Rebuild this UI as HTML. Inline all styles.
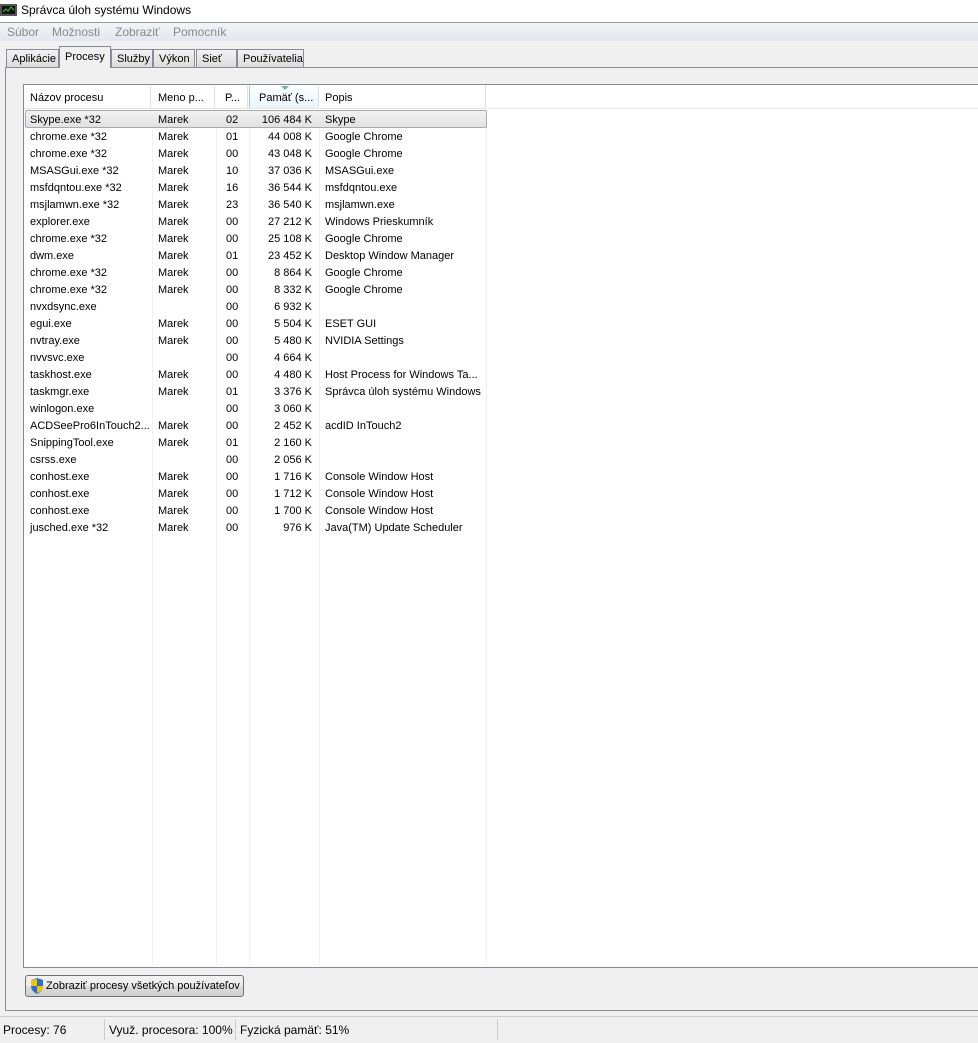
<html><head><style>
body{margin:0;width:978px;height:1041px;background:#f0f0f0;font-family:"Liberation Sans",sans-serif;font-size:11px;color:#000;position:relative;overflow:hidden}
.a{position:absolute}
.title{left:0;top:0;width:978px;height:22px;background:#fff;font-size:12px}
.menu{left:0;top:22px;width:978px;height:18px;background:linear-gradient(#f3f4f8,#e3e6ee);border-top:1px solid #999;color:#888;font-size:12px}
.menu span{position:absolute;top:2px}
.tab{top:49px;height:18px;border:1px solid #898c95;border-bottom:none;background:linear-gradient(#f2f2f2,#dcdcdc);padding:0 0 0 5px;line-height:19px;box-sizing:border-box;white-space:nowrap}
.panel{left:5px;top:67px;width:980px;height:942px;border:1px solid #898c95;background:#f0f0f0}
.list{left:23px;top:84px;width:960px;height:882px;border:1px solid #828790;background:#fff}
.hdr{left:24px;top:86px;width:960px;height:22px;background:#fff;border-bottom:1px solid #e5e5e5}
.h{position:absolute;top:86px;height:22px;line-height:25px;border-right:1px solid #dde}
.vl{position:absolute;top:108px;height:858px;width:1px;background:#eef2f8}
.row{position:absolute;left:24px;height:17px;line-height:17px;width:462px}
.row span{position:absolute;white-space:nowrap}
.status{left:0;top:1016px;width:978px;height:25px;background:#f0f0f0;border-top:1px solid #ccc;font-size:12px;line-height:26px}
</style></head><body>
<div class="a title"><svg class="a" style="left:0;top:4px" width="17" height="14"><rect x="0" y="0" width="17" height="12" fill="#555"/><rect x="2" y="2" width="13" height="8" fill="#111"/><polyline points="3,8 6,5 8,7 11,3 14,6" stroke="#3c3" fill="none"/></svg><span class="a" style="left:21px;top:3px">Správca úloh systému Windows</span></div>
<div class="a menu"><span style="left:7px">Súbor</span><span style="left:52px">Možnosti</span><span style="left:115px">Zobraziť</span><span style="left:173px">Pomocník</span></div>
<div class="a panel"></div>
<div class="a tab" style="left:6px;width:53px">Aplikácie</div>
<div class="a tab" style="left:59px;top:46px;height:22px;width:52px;background:#f0f0f0;line-height:21px">Procesy</div>
<div class="a tab" style="left:111px;width:42px">Služby</div>
<div class="a tab" style="left:153px;width:42px">Výkon</div>
<div class="a tab" style="left:196px;width:41px">Sieť</div>
<div class="a tab" style="left:237px;width:67px">Používatelia</div>
<div class="a list"></div>
<div class="a hdr"></div>
<div class="h" style="left:24px;width:127px;padding-left:6px;box-sizing:border-box">Názov procesu</div>
<div class="h" style="left:152px;width:63px;padding-left:6px;box-sizing:border-box">Meno p...</div>
<div class="h" style="left:216px;width:32px;padding-left:9px;box-sizing:border-box">P...</div>
<div class="h" style="left:249px;width:70px;padding-left:9px;box-sizing:border-box;background:linear-gradient(#fff,#e8f4fc);border-left:1px solid #9cd">Pamäť (s...<svg class="a" style="left:31px;top:0" width="9" height="5"><polygon points="0,0 8,0 4,4" fill="#7ab"/></svg></div>
<div class="h" style="left:320px;width:166px;padding-left:5px;box-sizing:border-box">Popis</div>
<div class="vl" style="left:152px"></div><div class="vl" style="left:216px"></div><div class="vl" style="left:249px"></div><div class="vl" style="left:319px"></div><div class="vl" style="left:486px"></div>
<div class="a" style="left:25px;top:110px;width:460px;height:16px;border:1px solid #aaa;border-radius:2px;background:linear-gradient(#f2f2f2,#e2e2e2)"></div>
<div id="rows"></div>
<script>
var d=[["Skype.exe *32","Marek","02","106 484 K","Skype"],["chrome.exe *32","Marek","01","44 008 K","Google Chrome"],["chrome.exe *32","Marek","00","43 048 K","Google Chrome"],["MSASGui.exe *32","Marek","10","37 036 K","MSASGui.exe"],["msfdqntou.exe *32","Marek","16","36 544 K","msfdqntou.exe"],["msjlamwn.exe *32","Marek","23","36 540 K","msjlamwn.exe"],["explorer.exe","Marek","00","27 212 K","Windows Prieskumník"],["chrome.exe *32","Marek","00","25 108 K","Google Chrome"],["dwm.exe","Marek","01","23 452 K","Desktop Window Manager"],["chrome.exe *32","Marek","00","8 864 K","Google Chrome"],["chrome.exe *32","Marek","00","8 332 K","Google Chrome"],["nvxdsync.exe","","00","6 932 K",""],["egui.exe","Marek","00","5 504 K","ESET GUI"],["nvtray.exe","Marek","00","5 480 K","NVIDIA Settings"],["nvvsvc.exe","","00","4 664 K",""],["taskhost.exe","Marek","00","4 480 K","Host Process for Windows Ta..."],["taskmgr.exe","Marek","01","3 376 K","Správca úloh systému Windows"],["winlogon.exe","","00","3 060 K",""],["ACDSeePro6InTouch2...","Marek","00","2 452 K","acdID InTouch2"],["SnippingTool.exe","Marek","01","2 160 K",""],["csrss.exe","","00","2 056 K",""],["conhost.exe","Marek","00","1 716 K","Console Window Host"],["conhost.exe","Marek","00","1 712 K","Console Window Host"],["conhost.exe","Marek","00","1 700 K","Console Window Host"],["jusched.exe *32","Marek","00","976 K","Java(TM) Update Scheduler"]];
var h="";d.forEach(function(r,i){h+='<div class="row" style="top:'+(112+i*17)+'px"><span style="left:6px">'+r[0]+'</span><span style="left:134px">'+r[1]+'</span><span style="left:202px">'+r[2]+'</span><span style="right:174px">'+r[3]+'</span><span style="left:301px">'+r[4]+'</span></div>'});
document.getElementById("rows").innerHTML=h;
</script>
<div class="a" style="left:25px;top:975px;width:217px;height:20px;border:1px solid #707070;border-radius:3px;background:linear-gradient(#f2f2f2,#ebebeb 50%,#dddddd 50%,#cfcfcf);line-height:20px;font-size:11px;white-space:nowrap;overflow:hidden"><svg class="a" style="left:4px;top:2px" width="14" height="16"><path d="M7 0 L13 2 L13 8 Q13 13 7 16 Q1 13 1 8 L1 2 Z" fill="#2a6fd0"/><path d="M7 1 L7 8 L1 8 L1 2 Z" fill="#f4c400"/><path d="M7 8 L13 8 Q13 13 7 15 Z" fill="#f4c400"/></svg><span class="a" style="left:20px">Zobraziť procesy všetkých používateľov</span></div>
<div class="a status"><span class="a" style="left:3px">Procesy: 76</span><span class="a" style="left:104px;top:2px;height:21px;border-left:1px solid #ccc"></span><span class="a" style="left:109px">Využ. procesora: 100%</span><span class="a" style="left:235px;top:2px;height:21px;border-left:1px solid #ccc"></span><span class="a" style="left:240px">Fyzická pamäť: 51%</span><span class="a" style="left:497px;top:2px;height:21px;border-left:1px solid #ccc"></span></div>
</body></html>
